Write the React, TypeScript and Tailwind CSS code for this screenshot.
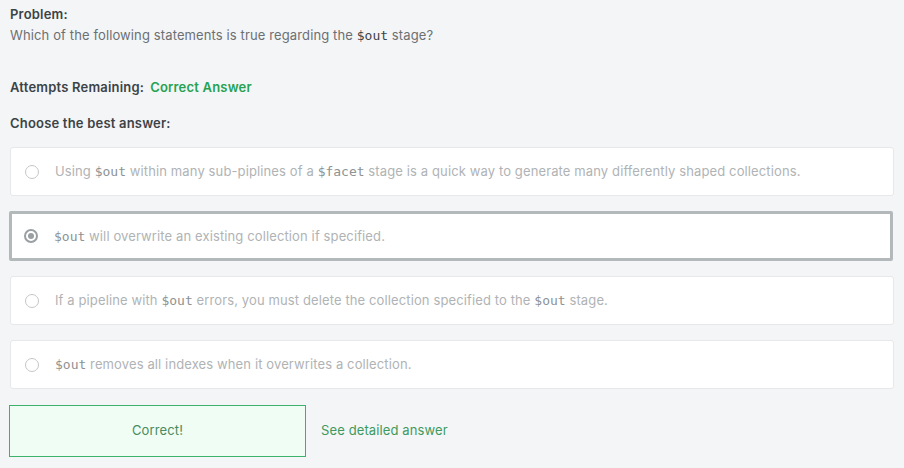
import React from "react";

const answers: { id: number; parts: (string | { code: string })[] }[] = [
  {
    id: 1,
    parts: [
      "Using ",
      { code: "$out" },
      " within many sub-piplines of a ",
      { code: "$facet" },
      " stage is a quick way to generate many differently shaped collections.",
    ],
  },
  {
    id: 2,
    parts: [{ code: "$out" }, " will overwrite an existing collection if specified."],
  },
  {
    id: 3,
    parts: [
      "If a pipeline with ",
      { code: "$out" },
      " errors, you must delete the collection specified to the ",
      { code: "$out" },
      " stage.",
    ],
  },
  {
    id: 4,
    parts: [{ code: "$out" }, " removes all indexes when it overwrites a collection."],
  },
];

function Code({ children }: { children: React.ReactNode }) {
  return (
    <code className="font-['DejaVu_Sans_Mono',monospace] text-[13px] tracking-normal text-[#8d9294]">
      {children}
    </code>
  );
}

export default function App() {
  const selected = 2;
  return (
    <div className="min-h-[468px] w-[904px] bg-[#f4f5f7] px-[10px] pt-[5px] font-['Inter',sans-serif] text-[13px]">
      <h2 className="font-semibold text-[#3c4346] leading-[18px] tracking-[0.2px]">Problem:</h2>
      <p className="mt-[3px] text-[#6b7073] leading-[18px] tracking-[0.12px]">
        Which of the following statements is true regarding the{" "}
        <code className="font-['DejaVu_Sans_Mono',monospace] tracking-normal text-[#3c4346]">$out</code> stage?
      </p>

      <div className="mt-[33px] flex gap-[6px] font-semibold leading-[18px] tracking-[0.2px]">
        <span className="text-[#3c4346]">Attempts Remaining:</span>
        <span className="text-[#27a24f]">Correct Answer</span>
      </div>

      <h3 className="mt-[18px] font-semibold text-[#3c4346] leading-[18px] tracking-[0.2px]">
        Choose the best answer:
      </h3>

      <div className="mt-[15px] flex flex-col gap-[15px]">
        {answers.map((a) => {
          const isSel = a.id === selected;
          return (
            <label
              key={a.id}
              className={
                isSel
                  ? "-ml-px mr-[1px] flex h-[50px] items-center rounded-[2px] border-[3px] border-[#b3b8bb] bg-white pl-[12px]"
                  : "flex h-[49px] items-center rounded-[3px] border border-[#e6e8ea] bg-white pl-[14px]"
              }
            >
              <span
                className={
                  "flex h-[14px] w-[14px] items-center justify-center rounded-full border " +
                  (isSel ? "border-[2px] border-[#9a9fa2]" : "border-[#c4c7c9]")
                }
              >
                {isSel && <span className="h-[6px] w-[6px] rounded-full bg-[#9a9fa2]" />}
              </span>
              <span className="ml-[16px] text-[#b0b3b5] leading-[18px] tracking-[0.12px]">
                {a.parts.map((p, i) =>
                  typeof p === "string" ? <span key={i}>{p}</span> : <Code key={i}>{p.code}</Code>
                )}
              </span>
            </label>
          );
        })}
      </div>

      <div className="mt-[16px] flex items-center">
        <button className="-ml-px h-[52px] w-[297px] border border-[#3fb26a] bg-[#f0fdf4] text-[#4a8a60] tracking-[0.12px]">
          Correct!
        </button>
        <a className="ml-[15px] text-[#3d9a5e] tracking-[0.12px]">See detailed answer</a>
      </div>
    </div>
  );
}
